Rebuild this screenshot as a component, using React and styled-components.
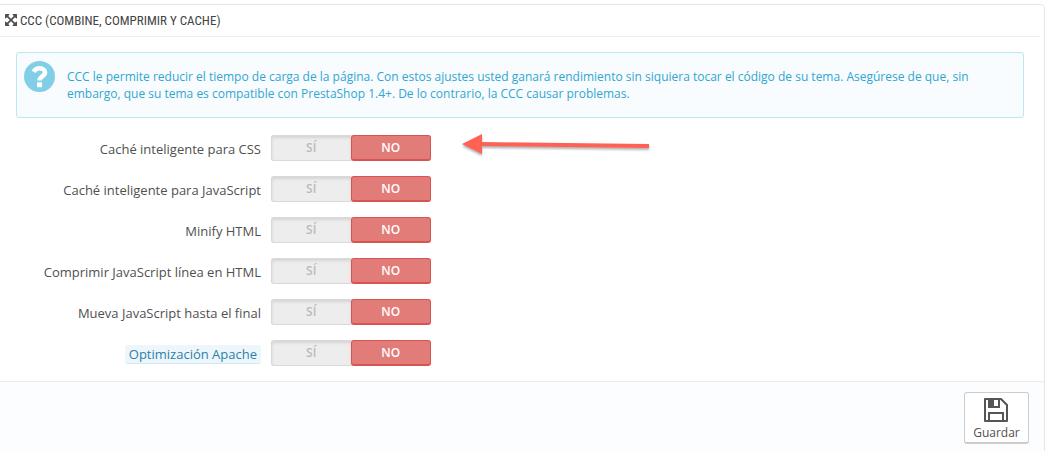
import React, { useState } from "react";
import styled, { createGlobalStyle } from "styled-components";

const OPTIONS = [
  { name: "css_cache", label: "Caché inteligente para CSS", arrow: true },
  { name: "js_cache", label: "Caché inteligente para JavaScript" },
  { name: "html_minify", label: "Minify HTML" },
  { name: "js_inline", label: "Comprimir JavaScript línea en HTML" },
  { name: "js_defer", label: "Mueva JavaScript hasta el final" },
  { name: "htaccess", label: "Optimización Apache", hint: true },
];

const ExpandIcon = () => (
  <svg width="12" height="12" viewBox="128 128 1536 1536" aria-hidden="true">
    <path
      fill="#505050"
      d="M1411 541l-355 355 355 355 144-144q29-31 70-14 39 17 39 59v448q0 26-19 45t-45 19h-448q-42 0-59-40-17-39 14-69l144-144-355-355-355 355 144 144q31 30 14 69-17 40-59 40h-448q-26 0-45-19t-19-45v-448q0-42 40-59 39-17 69 14l144 144 355-355-355-355-144 144q-19 19-45 19-12 0-24-5-40-17-40-59v-448q0-26 19-45t45-19h448q42 0 59 40 17 39-14 69l-144 144 355 355 355-355-144-144q-31-30-14-69 17-40 59-40h448q26 0 45 19t19 45v448q0 42-39 59-13 5-25 5-26 0-45-19z"
    />
  </svg>
);

const HelpIcon = () => (
  <svg width="31" height="31" viewBox="0 0 31 31" aria-hidden="true">
    <circle cx="15.5" cy="15.5" r="15.5" fill="#81cfe6" />
    <path
      d="M9.600 10.800C11 8.400 13 7.300 15.600 7.300c3.200 0 5.400 1.700 5.400 4.200 0 3.900-5.600 3.700-5.600 8"
      fill="none"
      stroke="#fff"
      strokeWidth="4.600"
    />
    <rect x="13" y="21.300" width="5" height="4.900" rx="0.600" fill="#fff" />
  </svg>
);

const SaveIcon = () => (
  <svg width="25" height="24" viewBox="0 0 25 24" aria-hidden="true">
    <path
      d="M1 1H17L23 7V23H1Z"
      fill="none"
      stroke="#555"
      strokeWidth="2"
      strokeLinejoin="round"
    />
    <path d="M5 1V9H15V1" fill="none" stroke="#555" strokeWidth="2" />
    <path d="M5 1H10V9H5Z" fill="#555" />
    <path d="M5 23V15H19V23" fill="none" stroke="#555" strokeWidth="2" />
  </svg>
);

const Arrow = () => (
  <ArrowDrawing width="190" height="26" viewBox="0 0 190 26" aria-hidden="true">
    <path d="M0 9L20 -1V7L187 9V13L20 11V19Z" fill="#ff6255" />
  </ArrowDrawing>
);

function Switch({ name, labelId }) {
  const [enabled, setEnabled] = useState(false);

  return (
    <SwitchBox role="radiogroup" aria-labelledby={labelId}>
      <Choice $side="yes" $active={enabled}>
        <input
          type="radio"
          name={name}
          checked={enabled}
          onChange={() => setEnabled(true)}
        />
        SÍ
      </Choice>
      <Choice $side="no" $active={!enabled}>
        <input
          type="radio"
          name={name}
          checked={!enabled}
          onChange={() => setEnabled(false)}
        />
        NO
      </Choice>
    </SwitchBox>
  );
}

export default function App() {
  return (
    <>
      <GlobalStyle />
      <Panel onSubmit={(e) => e.preventDefault()}>
        <Heading>
          <ExpandIcon />
          CCC (Combine, comprimir y cache)
        </Heading>
        <Body>
          <Info>
            <HelpIcon />
            <p>
              CCC le permite reducir el tiempo de carga de la página. Con estos
              ajustes usted ganará rendimiento sin siquiera tocar el código de
              su tema. Asegúrese de que, sin embargo, que su tema es compatible
              con PrestaShop 1.4+. De lo contrario, la CCC causar problemas.
            </p>
          </Info>
          <Options>
            {OPTIONS.map((option) => (
              <Row key={option.name}>
                <Label id={`${option.name}_label`}>
                  {option.hint ? <Hint>{option.label}</Hint> : option.label}
                </Label>
                <Switch name={option.name} labelId={`${option.name}_label`} />
                {option.arrow && <Arrow />}
              </Row>
            ))}
          </Options>
        </Body>
        <Footer>
          <SaveButton type="submit">
            <SaveIcon />
            Guardar
          </SaveButton>
        </Footer>
      </Panel>
    </>
  );
}

const GlobalStyle = createGlobalStyle`
  * {
    box-sizing: border-box;
  }

  body {
    margin: 0;
    background: #fff;
    color: #505050;
    font-family: "Open Sans", sans-serif;
    font-size: 12px;
  }
`;

const Panel = styled.form`
  margin: 4px 4px 0 0;
  border: 1px solid #e6e6e6;
  border-width: 1px 1px 0 0;
  border-top-right-radius: 5px;
`;

const Heading = styled.h3`
  display: flex;
  align-items: center;
  gap: 3px;
  height: 32px;
  margin: 0 4px 0 0;
  padding: 0 0 1px 5px;
  border-bottom: 1px solid #eee;
  color: #444;
  font-family: "Ubuntu Condensed", "Liberation Sans Narrow", "Roboto Condensed",
    sans-serif;
  font-size: 13px;
  font-weight: 400;
  text-transform: uppercase;
`;

const Body = styled.div`
  padding: 15px 20px 15px 16px;
`;

const Info = styled.div`
  display: flex;
  gap: 12px;
  min-height: 66px;
  padding: 8px 7px;
  border: 1px solid #bce8f1;
  border-radius: 3px;
  background: #f8fcfe;
  color: #31a6d0;

  svg {
    flex: none;
  }

  p {
    margin: 7px 0 0;
    padding-right: 32px;
    line-height: 17px;
  }
`;

const Options = styled.div`
  display: flex;
  flex-direction: column;
  gap: 15px;
  margin-top: 17px;
`;

const Row = styled.div`
  display: flex;
  align-items: center;
  height: 26px;
`;

const Label = styled.span`
  width: 245px;
  margin-right: 10px;
  padding-top: 2px;
  font-size: 13px;
  line-height: 18px;
  text-align: right;
`;

const Hint = styled.span`
  display: inline-block;
  padding: 0 4px;
  border-bottom: 1px solid #d0e8f2;
  border-radius: 3px;
  background: #edf7fb;
  color: #2d7fa8;
`;

const SwitchBox = styled.div`
  display: flex;
  width: 160px;
  height: 26px;
  border-radius: 3px;
  background: #ededed;
`;

const Choice = styled.label`
  display: flex;
  flex: 1;
  align-items: center;
  justify-content: center;
  padding-bottom: 2px;
  border: 1px solid #d9d9d9;
  border-radius: ${({ $side }) => ($side === "yes" ? "3px 0 0 3px" : "3px")};
  box-shadow: inset 0 2px 3px rgba(0, 0, 0, 0.1);
  color: #bbb;
  cursor: pointer;
  font-weight: 600;

  ${({ $side }) => $side === "yes" && "border-right: 0;"}

  ${({ $active, $side }) =>
    $active &&
    `
    border: 1px solid ${$side === "yes" ? "#7abd5a" : "#d9534f"};
    border-bottom-width: 2px;
    border-radius: 3px;
    background: ${$side === "yes" ? "#92d097" : "#e27c79"};
    box-shadow: none;
    color: #fff;
    padding-bottom: 1px;
  `}

  input {
    appearance: none;
    width: 0;
    height: 0;
    margin: 0;
  }
`;

const ArrowDrawing = styled.svg`
  margin-left: 31px;
  overflow: visible;
  filter: drop-shadow(0 2px 1px rgba(0, 0, 0, 0.3));
`;

const Footer = styled.div`
  display: flex;
  justify-content: flex-end;
  min-height: 70px;
  padding: 10px 15px 0 0;
  border-top: 1px solid #e9edf0;
  background: #fcfdfe;
`;

const SaveButton = styled.button`
  display: flex;
  flex-direction: column;
  align-items: center;
  gap: 2px;
  width: 65px;
  height: 52px;
  padding: 5px 0 0;
  border: 1px solid #ccc;
  border-bottom-width: 2px;
  border-radius: 3px;
  background: #fff;
  color: #505050;
  cursor: pointer;
  font-family: inherit;
  font-size: 12px;
  line-height: 18px;
`;
